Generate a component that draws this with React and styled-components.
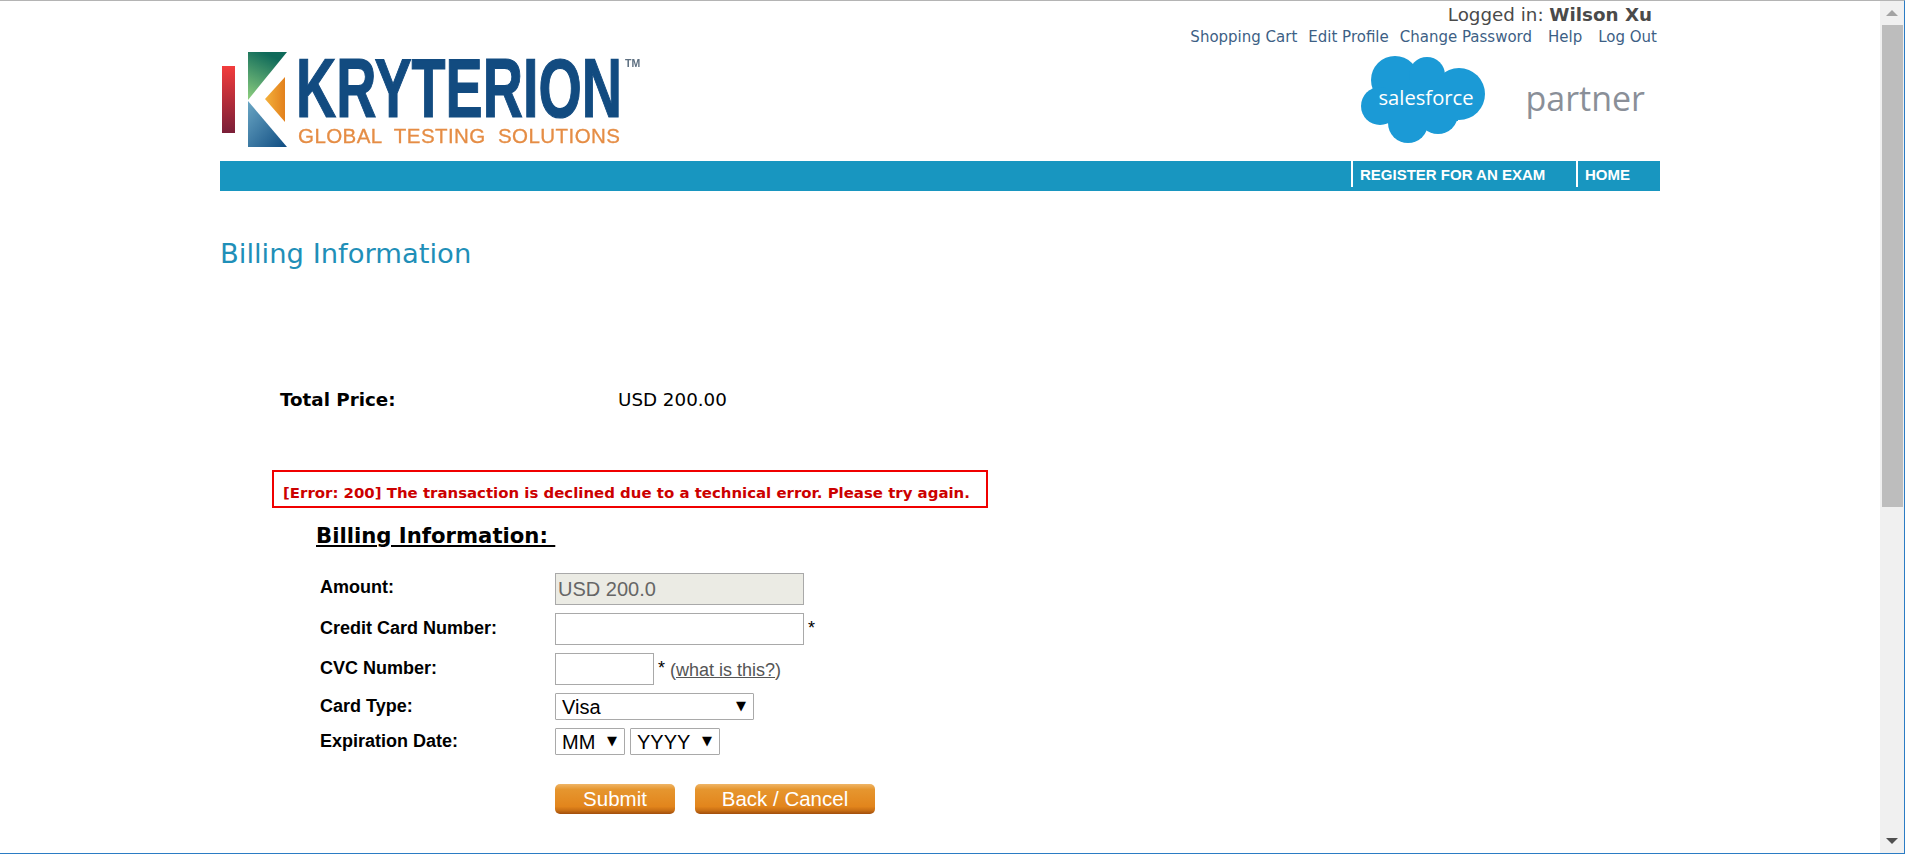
import React from 'react'
import styled, { createGlobalStyle } from 'styled-components'

const GlobalStyle = createGlobalStyle`
  html, body {
    margin: 0;
    padding: 0;
    height: 100%;
    overflow: hidden;
    background: #fff;
  }
`

const links = ['Shopping Cart', 'Edit Profile', 'Change Password', 'Help', 'Log Out']

function KryterionLogo() {
  return (
    <LogoSvg width="425" height="100" viewBox="0 0 425 100">
      <defs>
        <linearGradient id="bar" x1="0" y1="0" x2="0" y2="1">
          <stop offset="0" stopColor="#f23c3c" />
          <stop offset="1" stopColor="#7a1f38" />
        </linearGradient>
        <linearGradient id="top" x1="0" y1="1" x2="0.4" y2="0">
          <stop offset="0" stopColor="#8fd07f" />
          <stop offset="1" stopColor="#0f6a5a" />
        </linearGradient>
        <linearGradient id="bottom" x1="0" y1="0" x2="1" y2="1">
          <stop offset="0" stopColor="#6aa6c4" />
          <stop offset="1" stopColor="#0f4c81" />
        </linearGradient>
        <linearGradient id="mid" x1="0" y1="0" x2="1" y2="0">
          <stop offset="0" stopColor="#f4b13c" />
          <stop offset="1" stopColor="#e2801c" />
        </linearGradient>
      </defs>
      <rect x="2" y="16" width="13" height="67" fill="url(#bar)" />
      <polygon points="28,2 67,2 28,50" fill="url(#top)" />
      <polygon points="28,51 67,97 28,97" fill="url(#bottom)" />
      <polygon points="65,27 65,72 45,49" fill="url(#mid)" />
      <text x="76" y="67" fontFamily="Liberation Sans, sans-serif" fontWeight="700" fontSize="83"
        fill="#124b80" textLength="326" lengthAdjust="spacingAndGlyphs" stroke="#124b80" strokeWidth="1.2">KRYTERION</text>
      <text x="405" y="17" fontFamily="Liberation Sans, sans-serif" fontWeight="700" fontSize="10.5" fill="#5d6f80">TM</text>
      <text x="78" y="93" fontFamily="Liberation Sans, sans-serif" fontSize="20.5"
        fill="#e58d45" stroke="#e58d45" strokeWidth="0.3" textLength="322" lengthAdjust="spacing" xmlSpace="preserve">GLOBAL  TESTING  SOLUTIONS</text>
    </LogoSvg>
  )
}

function SalesforceLogo() {
  return (
    <CloudSvg width="126" height="90" viewBox="0 0 126 90">
      <g fill="#1b9ad6">
        <circle cx="34" cy="24" r="24" />
        <circle cx="66" cy="19" r="18" />
        <circle cx="98" cy="38" r="26" />
        <circle cx="19" cy="50" r="19" />
        <circle cx="47" cy="67" r="20" />
        <circle cx="77" cy="58" r="20" />
        <rect x="25" y="25" width="72" height="40" />
      </g>
      <text x="65" y="49" textAnchor="middle" fontFamily="Open Sans, sans-serif" fontSize="19.5" fill="#fff"
        textLength="95" lengthAdjust="spacingAndGlyphs">salesforce</text>
    </CloudSvg>
  )
}

export default function App() {
  return (
    <Frame>
      <GlobalStyle />
      <Page>
        <Wrapper>
          <Header>
            <UserBlock>
              <LoggedIn>Logged in: <strong>Wilson Xu</strong></LoggedIn>
              <TopLinks>
                {links.map((link) => (
                  <a key={link}>{link}</a>
                ))}
              </TopLinks>
            </UserBlock>
            <Brand>
              <KryterionLogo />
              <Partner>
                <SalesforceLogo />
                <PartnerWord>partner</PartnerWord>
              </Partner>
            </Brand>
          </Header>

          <NavBar>
            <NavItem $width={225}>REGISTER FOR AN EXAM</NavItem>
            <NavItem $width={84}>HOME</NavItem>
          </NavBar>

          <Title>Billing Information</Title>

          <PriceRow>
            <PriceLabel>Total Price:</PriceLabel>
            <span>USD 200.00</span>
          </PriceRow>

          <ErrorBox>[Error: 200] The transaction is declined due to a technical error. Please try again.</ErrorBox>

          <FormHeading>Billing Information:&nbsp;</FormHeading>

          <Form>
            <FormRow $height={40}>
              <Label $line={29}>Amount:</Label>
              <TextBox $width={249} $disabled>USD 200.0</TextBox>
            </FormRow>
            <FormRow $height={40}>
              <Label $line={30}>Credit Card Number:</Label>
              <TextBox $width={249} />
              <Star>*</Star>
            </FormRow>
            <FormRow $height={40}>
              <Label $line={30}>CVC Number:</Label>
              <TextBox $width={99} />
              <Star>*</Star>
              <Hint>(<a>what is this?</a>)</Hint>
            </FormRow>
            <FormRow $height={35}>
              <Label $line={26}>Card Type:</Label>
              <SelectBox $width={199}>Visa<Caret>▼</Caret></SelectBox>
            </FormRow>
            <FormRow $height={35}>
              <Label $line={26}>Expiration Date:</Label>
              <SelectBox $width={70}>MM<Caret>▼</Caret></SelectBox>
              <SelectBox $width={90}>YYYY<Caret>▼</Caret></SelectBox>
            </FormRow>
            <Buttons>
              <OrangeButton $width={120}>Submit</OrangeButton>
              <OrangeButton $width={180}>Back / Cancel</OrangeButton>
            </Buttons>
          </Form>
        </Wrapper>
      </Page>
      <Scrollbar>
        <ScrollArrow><UpArrow /></ScrollArrow>
        <ThumbTrack><Thumb /></ThumbTrack>
        <ScrollArrow><DownArrow /></ScrollArrow>
      </Scrollbar>
    </Frame>
  )
}

const Frame = styled.div`
  box-sizing: border-box;
  display: flex;
  width: 1905px;
  height: 854px;
  overflow: hidden;
  border-top: 1px solid #b4b4b4;
  border-right: 1px solid #2b7cc4;
  border-bottom: 1px solid #2b7cc4;
  font-family: 'DejaVu Sans', Verdana, sans-serif;
  color: #000;
`

const Page = styled.div`
  flex: 1;
  overflow: hidden;
  padding-left: 220px;
`

const Wrapper = styled.div`
  width: 1440px;
`

const Header = styled.header`
  height: 160px;
  display: flex;
  flex-direction: column;
`

const UserBlock = styled.div`
  display: flex;
  flex-direction: column;
  align-items: flex-end;
  padding-right: 3px;
`

const LoggedIn = styled.div`
  margin-top: 4px;
  padding-right: 5px;
  font-size: 18.3px;
  line-height: 20px;
  color: #4a4a4a;
  strong {
    font-weight: 700;
  }
`

const TopLinks = styled.nav`
  display: flex;
  gap: 11px;
  margin-top: 3px;
  font-size: 15px;
  line-height: 19px;
  color: #3d5f85;
  a:nth-child(4), a:nth-child(5) {
    margin-left: 5px;
  }
`

const Brand = styled.div`
  display: flex;
  justify-content: space-between;
  margin-top: 3px;
  padding-right: 15px;
`

const LogoSvg = styled.svg`
  display: block;
  filter: blur(0.4px);
`

const Partner = styled.div`
  display: flex;
  align-items: center;
  gap: 38px;
  margin-top: 6px;
  height: 90px;
`

const CloudSvg = styled.svg`
  display: block;
`

const PartnerWord = styled.span`
  font-family: 'Open Sans', sans-serif;
  font-size: 34px;
  color: #8a8f98;
  margin-top: -7px;
`

const NavBar = styled.nav`
  box-sizing: border-box;
  height: 30px;
  background: #1896c0;
  display: flex;
  justify-content: flex-end;
  align-items: flex-start;
`

const NavItem = styled.a`
  box-sizing: border-box;
  width: ${(p) => p.$width}px;
  height: 26px;
  border-left: 2px solid #fff;
  padding-left: 7px;
  font-family: 'Liberation Sans', Arial, sans-serif;
  font-weight: 700;
  font-size: 15px;
  line-height: 27px;
  color: #fff;
`

const Title = styled.h1`
  margin: 47px 0 0;
  font-size: 27.4px;
  font-weight: 400;
  line-height: 32px;
  color: #1f8fb8;
`

const PriceRow = styled.div`
  display: flex;
  margin: 120px 0 0 60px;
  font-size: 18.3px;
  line-height: 20px;
`

const PriceLabel = styled.strong`
  width: 338px;
`

const ErrorBox = styled.div`
  box-sizing: border-box;
  width: 716px;
  height: 38px;
  margin: 60px 0 0 52px;
  border: 2px solid #f00000;
  padding-left: 9px;
  font-size: 14.95px;
  font-weight: 700;
  line-height: 42px;
  color: #cc0000;
  white-space: nowrap;
`

const FormHeading = styled.h2`
  margin: 15px 0 0 96px;
  font-size: 21.2px;
  font-weight: 700;
  line-height: 26px;
  text-decoration: underline;
`

const Form = styled.div`
  margin: 24px 0 0 100px;
  font-family: 'Liberation Sans', Arial, sans-serif;
`

const FormRow = styled.div`
  display: flex;
  align-items: flex-start;
  gap: 5px;
  height: ${(p) => p.$height}px;
`

const Label = styled.label`
  width: 230px;
  font-size: 18px;
  font-weight: 700;
  line-height: ${(p) => p.$line}px;
`

const TextBox = styled.div`
  box-sizing: border-box;
  width: ${(p) => p.$width}px;
  height: 32px;
  margin-right: -1px;
  border: 1px solid #a9a9a9;
  padding-left: 2px;
  background: ${(p) => (p.$disabled ? '#ebebe4' : '#fff')};
  color: #666;
  font-size: 20px;
  line-height: 30px;
`

const Star = styled.span`
  font-size: 18px;
  line-height: 31px;
`

const Hint = styled.span`
  font-size: 18px;
  line-height: 34px;
  color: #555;
  a {
    text-decoration: underline;
  }
`

const SelectBox = styled.div`
  box-sizing: border-box;
  display: flex;
  justify-content: space-between;
  width: ${(p) => p.$width}px;
  height: 27px;
  border: 1px solid #a9a9a9;
  border-radius: 1px;
  padding: 0 7px 0 6px;
  font-size: 20px;
  line-height: 26px;
`

const Caret = styled.span`
  font-family: 'DejaVu Sans', sans-serif;
  font-size: 13px;
  line-height: 24px;
`

const Buttons = styled.div`
  display: flex;
  gap: 20px;
  margin: 21px 0 0 235px;
`

const OrangeButton = styled.button`
  box-sizing: border-box;
  width: ${(p) => p.$width}px;
  height: 30px;
  border: 0;
  border-radius: 5px;
  padding: 0;
  background: linear-gradient(#efb566 0, #e6962f 18%, #e2851c 75%, #c96f14 88%, #a04d0c 100%);
  font-family: 'Liberation Sans', Arial, sans-serif;
  font-size: 20.5px;
  color: #fff;
`

const Scrollbar = styled.aside`
  width: 24px;
  flex: none;
  display: flex;
  flex-direction: column;
  background: #f0f0f0;
`

const ScrollArrow = styled.div`
  height: 24px;
  flex: none;
  display: flex;
  align-items: center;
  justify-content: center;
`

const UpArrow = styled.div`
  border-left: 6px solid transparent;
  border-right: 6px solid transparent;
  border-bottom: 6px solid #a3a3a3;
`

const DownArrow = styled.div`
  border-left: 6px solid transparent;
  border-right: 6px solid transparent;
  border-top: 6px solid #505050;
`

const ThumbTrack = styled.div`
  flex: 1;
  display: flex;
  justify-content: center;
`

const Thumb = styled.div`
  width: 21px;
  height: 482px;
  background: #bdbdbd;
`
